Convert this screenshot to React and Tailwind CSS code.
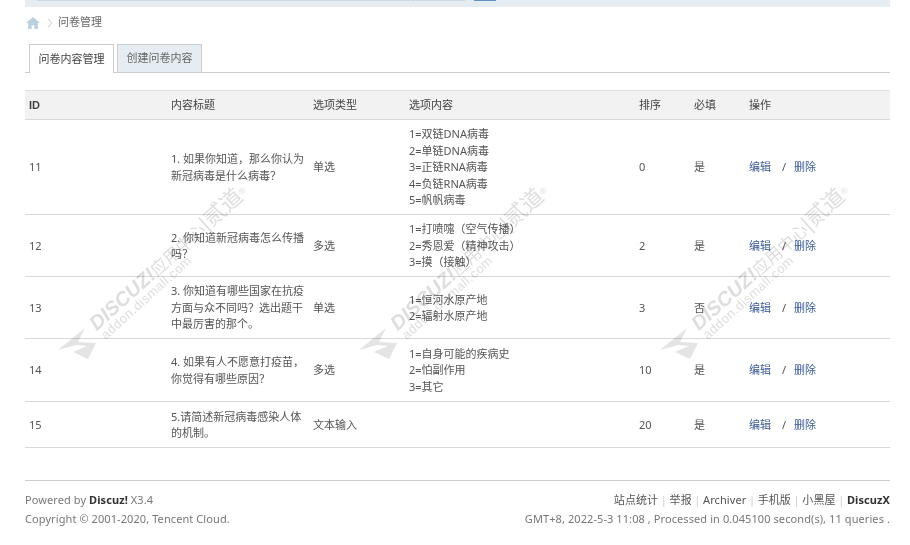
const rows = [
  { id: 11, title: ["1. 如果你知道，那么你认为", "新冠病毒是什么病毒？"], type: "单选", opts: ["1=双链DNA病毒", "2=单链DNA病毒", "3=正链RNA病毒", "4=负链RNA病毒", "5=帆帆病毒"], order: 0, req: "是", h: "h-[95px]" },
  { id: 12, title: ["2. 你知道新冠病毒怎么传播", "吗？"], type: "多选", opts: ["1=打喷嚏（空气传播）", "2=秀恩爱（精神攻击）", "3=摸（接触）"], order: 2, req: "是", h: "h-[62px]" },
  { id: 13, title: ["3. 你知道有哪些国家在抗疫", "方面与众不同吗？选出题干", "中最厉害的那个。"], type: "单选", opts: ["1=恒河水原产地", "2=辐射水原产地"], order: 3, req: "否", h: "h-[62px]" },
  { id: 14, title: ["4. 如果有人不愿意打疫苗，", "你觉得有哪些原因？"], type: "多选", opts: ["1=自身可能的疾病史", "2=怕副作用", "3=其它"], order: 10, req: "是", h: "h-[63px]" },
  { id: 15, title: ["5.请简述新冠病毒感染人体", "的机制。"], type: "文本输入", opts: [], order: 20, req: "是", h: "h-[46px]" },
];

const gridCols = "grid grid-cols-[142px_142px_96px_230px_55px_55px_141px] items-center";

function Watermark({ x, y }) {
  return (
    <div className="absolute w-[300px] h-[200px] pointer-events-none mix-blend-multiply" style={{ left: x, top: y }}>
      <svg className="absolute left-[-1px] top-[132px]" width="40" height="33" viewBox="0 0 40 33">
        <path d="M1 23 L28 1 L21 15 L39 16 L31 32 L16 25 L30 19 L19 18 Z" fill="#e4e4e4" />
      </svg>
      <div className="absolute left-[34px] top-[118px] h-[26px] whitespace-nowrap text-[20px] leading-[26px] italic font-bold text-[#dedede] [font-family:'Liberation_Sans','Noto_Sans_CJK_SC',sans-serif] origin-left -rotate-[42deg]">
        DISCUZ!<span className="font-normal not-italic text-[17px]">应用中心</span>
        <span className="font-normal not-italic text-[22px]">|贰道</span>
        <span className="font-normal not-italic text-[9px] align-top">®</span>
      </div>
      <div className="absolute left-[45px] top-[134px] h-[16px] whitespace-nowrap text-[13px] leading-[16px] tracking-[0.5px] text-[#dedede] [font-family:'Liberation_Sans',sans-serif] origin-left -rotate-[42deg]">
        addon.dismall.com
      </div>
    </div>
  );
}

export default function App() {
  return (
    <div className="relative w-[910px] h-[545px] overflow-hidden bg-white text-[11px] leading-[16.5px] text-[#555] [font-family:'Noto_Sans','Noto_Sans_CJK_SC',sans-serif]">
      <div className="mx-[25px] w-[865px]">
        <div className="relative h-[7px] bg-[#e5edf2]">
          <div className="absolute left-[12px] top-0 h-[1px] w-[373px] bg-white border-b border-[#cfd8df]" />
          <div className="absolute left-[386px] top-0 h-[1px] w-[54px] bg-white border-b border-[#cfd8df]" />
          <div className="absolute left-[449px] top-0 h-[1px] w-[22px] bg-[#5f93c4]" />
        </div>

        <div className="flex items-center h-[30px]">
          <svg width="14" height="12" viewBox="0 0 13 11" className="ml-[1px] mt-[1px]">
            <path d="M6.5 0 L13 5.5 L11 5.5 L11 11 L7.8 11 L7.8 7.5 L5.2 7.5 L5.2 11 L2 11 L2 5.5 L0 5.5 Z" fill="#b9d0de" />
          </svg>
          <svg width="6" height="10" viewBox="0 0 6 10" className="ml-[7px] mt-[1px]">
            <path d="M1 0.5 L4.5 5 L1 9.5" fill="none" stroke="#c9c9c9" />
          </svg>
          <span className="ml-[5px] text-[#666]">问卷管理</span>
        </div>

        <div className="mt-[7px] flex h-[29px] border-b border-[#cdcdcd] pl-[4px]">
          <div className="flex h-[29px] w-[85px] items-center justify-center border border-b-0 border-[#cdcdcd] bg-white text-[#444]">问卷内容管理</div>
          <div className="ml-[3px] flex h-[28px] w-[85px] items-center justify-center border border-b-0 border-[#cdcdcd] bg-[#e5edf2] text-[#666]">创建问卷内容</div>
        </div>

        <div className={`${gridCols} mt-[17px] h-[30px] border-y border-[#d8d8d8] border-t-[#e2e2e2] bg-[#f2f2f2] pl-[4px] text-[#444]`}>
          <span className="font-bold [font-family:'Liberation_Sans',sans-serif]">ID</span>
          <span>内容标题</span>
          <span>选项类型</span>
          <span>选项内容</span>
          <span>排序</span>
          <span>必填</span>
          <span>操作</span>
        </div>

        {rows.map((r) => (
          <div key={r.id} className={`${gridCols} ${r.h} border-b border-[#d8d8d8] pl-[4px] pt-[1px]`}>
            <span>{r.id}</span>
            <div>
              {r.title.map((t) => (
                <div key={t} className="whitespace-nowrap">{t}</div>
              ))}
            </div>
            <span>{r.type}</span>
            <div>
              {r.opts.map((o) => (
                <div key={o} className="whitespace-nowrap">{o}</div>
              ))}
            </div>
            <span>{r.order}</span>
            <span>{r.req}</span>
            <div className="flex items-center">
              <span className="text-[#3b5a96]">编辑</span>
              <span className="ml-[11px] text-[#555]">/</span>
              <span className="ml-[8px] text-[#3b5a96]">删除</span>
            </div>
          </div>
        ))}

        <div className="mt-[32px] flex justify-between border-t border-[#cdcdcd] pt-[9px] leading-[19px] tracking-[0.085px]">
          <div className="text-[#777]">
            <div>Powered by <b className="text-[#333]">Discuz!</b> X3.4</div>
            <div>Copyright © 2001-2020, Tencent Cloud.</div>
          </div>
          <div className="text-right text-[#777]">
            <div className="flex justify-end text-[#555]">
              <span>站点统计</span><span className="mx-[2.6px] text-[#ccc]">|</span>
              <span>举报</span><span className="mx-[2.6px] text-[#ccc]">|</span>
              <span>Archiver</span><span className="mx-[2.6px] text-[#ccc]">|</span>
              <span>手机版</span><span className="mx-[2.6px] text-[#ccc]">|</span>
              <span>小黑屋</span><span className="mx-[2.6px] text-[#ccc]">|</span>
              <b className="text-[#333]">DiscuzX</b>
            </div>
            <div>GMT+8, 2022-5-3 11:08 , Processed in 0.045100 second(s), 11 queries .</div>
          </div>
        </div>
      </div>

      <Watermark x={58} y={195} />
      <Watermark x={359} y={195} />
      <Watermark x={660} y={195} />
    </div>
  );
}
